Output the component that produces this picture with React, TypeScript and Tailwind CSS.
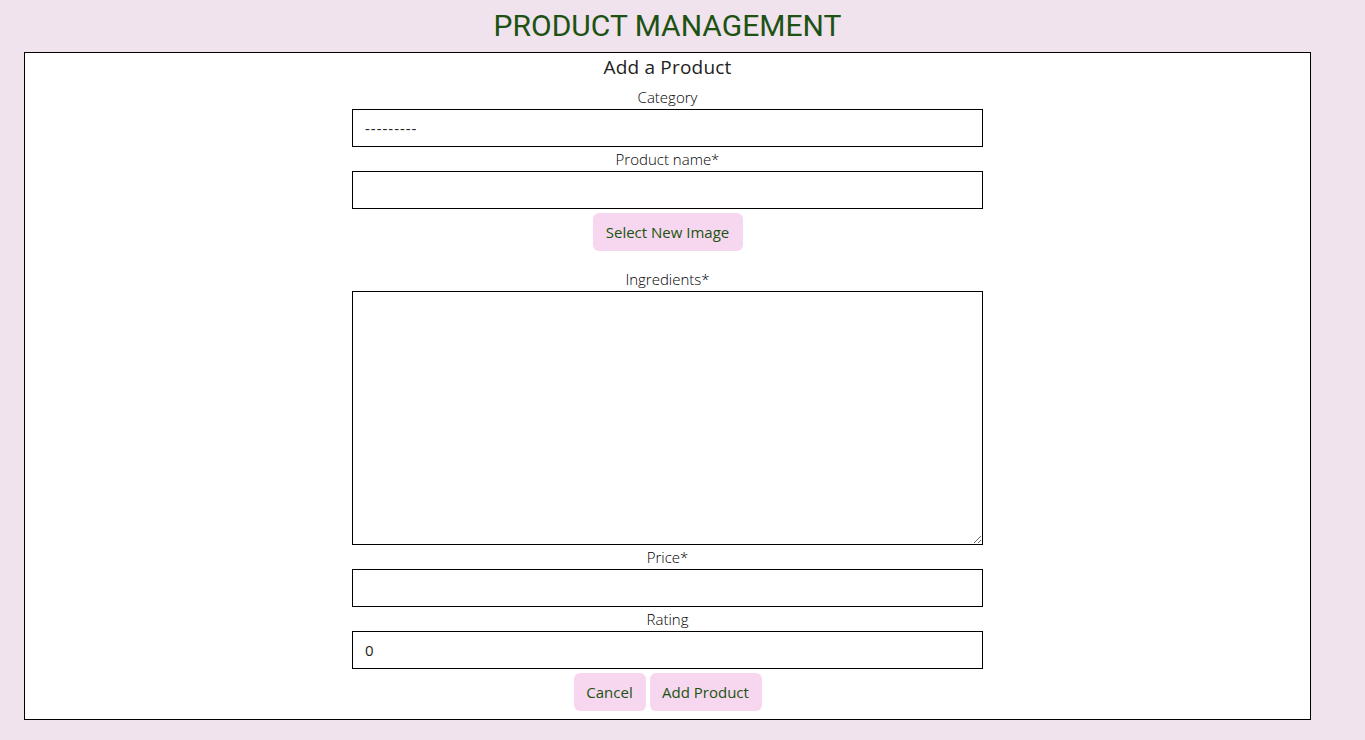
export default function App() {
    return (
        <div className="min-h-screen bg-[#f0e3ee] pl-6 pr-[54px] pt-2 pb-5 font-['Open_Sans',sans-serif]">
            {/* Page title */}
            <h1 className="text-center text-[30px] leading-[36px] text-[#1d5213] font-['Roboto',sans-serif] mb-2">
                PRODUCT MANAGEMENT
            </h1>

            <div className="border border-black bg-white pb-2">
                <h2 className="text-center text-[19px] leading-[28px] mb-1 font-medium tracking-[0.2px] text-[#222]">Add a Product</h2>

                <form className="w-[631px] mx-auto flex flex-col items-center" onSubmit={(e) => e.preventDefault()}>
                    <label className="text-[15px] leading-[24px] font-light text-black">Category</label>
                    <div className="w-full h-[38px] border border-black px-3 flex items-center text-[15px] tracking-[1px] text-[#222]">
                        ---------
                    </div>

                    <label className="text-[15px] leading-[24px] font-light text-black">Product name*</label>
                    <input className="w-full h-[38px] border border-black px-3 text-[15px] outline-none" />

                    <button type="button" className="mt-1 h-[38px] w-[150px] rounded-md bg-[#f7d7ef] text-[15px] font-normal text-[#1a5410]">
                        Select New Image
                    </button>

                    <label className="mt-4 text-[15px] leading-[24px] font-light text-black">Ingredients*</label>
                    <textarea className="w-full h-[254px] border border-black px-3 py-2 text-[15px] outline-none block resize" />

                    <label className="text-[15px] leading-[24px] font-light text-black">Price*</label>
                    <input className="w-full h-[38px] border border-black px-3 text-[15px] outline-none" />

                    <label className="text-[15px] leading-[24px] font-light text-black">Rating</label>
                    <input className="w-full h-[38px] border border-black px-3 text-[15px] text-[#222] outline-none" defaultValue="0" />

                    <div className="mt-1 flex gap-1">
                        <button type="button" className="h-[38px] w-[72px] rounded-md bg-[#f7d7ef] text-[15px] font-normal text-[#1a5410]">
                            Cancel
                        </button>
                        <button type="submit" className="h-[38px] w-[112px] rounded-md bg-[#f7d7ef] text-[15px] font-normal text-[#1a5410]">
                            Add Product
                        </button>
                    </div>
                </form>
            </div>
        </div>
    )
}
